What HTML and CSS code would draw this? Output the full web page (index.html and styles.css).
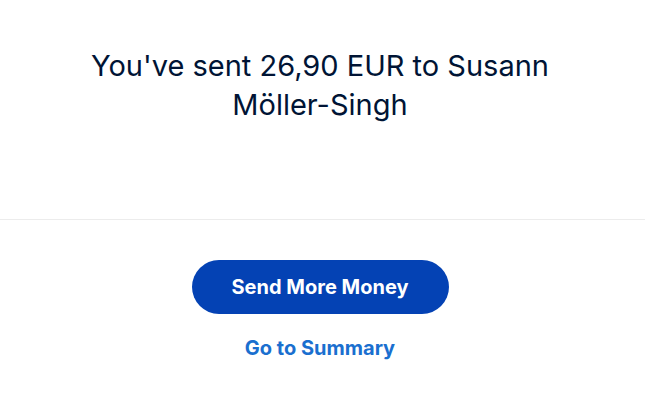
FILE: index.html
```html
<!DOCTYPE html>
<html>
<head>
<meta charset="utf-8">
<link rel="stylesheet" href="styles.css">
</head>
<body>
<main class="page">
  <section class="top">
    <h1 class="title">You've sent 26,90 EUR to Susann Möller-Singh</h1>
  </section>
  <hr class="divider">
  <section class="actions">
    <button class="primary">Send More Money</button>
    <a class="link" href="#">Go to Summary</a>
  </section>
</main>
</body>
</html>
```
FILE: styles.css
```css
html, body {
  margin: 0;
  padding: 0;
  background: #ffffff;
  font-family: Inter, "Noto Sans", "Liberation Sans", sans-serif;
}
.page {
  width: 645px;
  height: 404px;
  display: flex;
  flex-direction: column;
}
.top {
  padding: 47px 85px 0 80px;
  height: 219px;
  box-sizing: border-box;
}
.title {
  margin: 0;
  text-align: center;
  font-size: 29px;
  font-weight: 400;
  line-height: 38.5px;
  color: #001435;
  letter-spacing: 0;
}
.divider {
  margin: 0;
  border: 0;
  border-top: 1px solid #ececec;
}
.actions {
  display: flex;
  flex-direction: column;
  align-items: center;
  padding: 40px 5px 0 0;
}
.primary {
  width: 257px;
  height: 54px;
  border: 0;
  border-radius: 27px;
  background: #0442b4;
  color: #ffffff;
  font-family: inherit;
  font-size: 20px;
  font-weight: 700;
  padding: 0;
}
.link {
  margin-top: 23px;
  color: #1a6fcf;
  font-size: 20px;
  font-weight: 700;
  text-decoration: none;
  line-height: 22px;
}
```
